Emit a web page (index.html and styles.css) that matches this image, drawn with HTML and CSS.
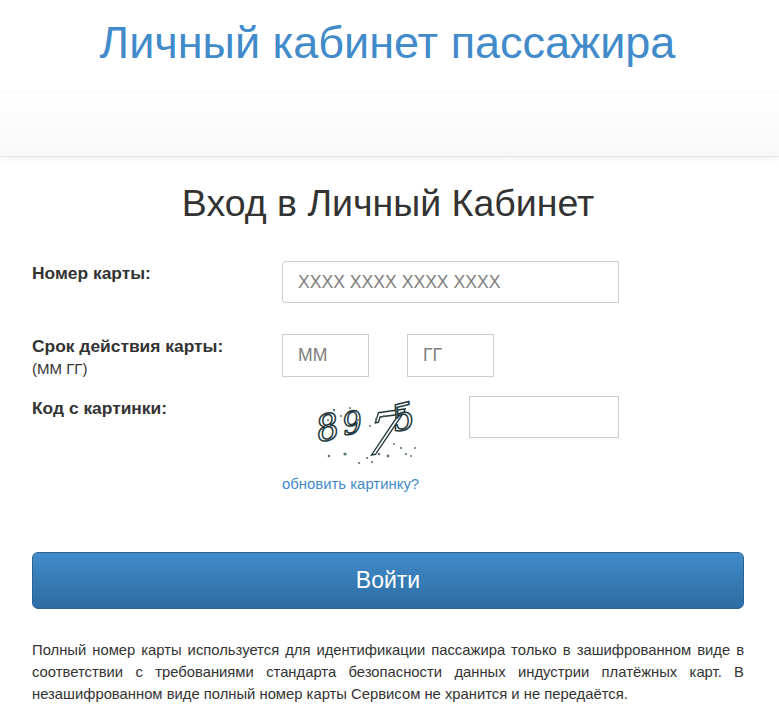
FILE: index.html
```html
<!DOCTYPE HTML>
<html>

<head>
    <meta charset="utf-8">
    <link rel="stylesheet" href="styles.css">
</head>

<body>
    <header class="top">
        <h1 class="site-title">Личный кабинет пассажира</h1>
    </header>
    <div class="navbar"></div>

    <main class="content">
        <h2 class="page-title">Вход в Личный Кабинет</h2>

        <form class="login">
            <div class="row row-card">
                <label class="label">Номер карты:</label>
                <input class="field field-card" type="text" placeholder="XXXX XXXX XXXX XXXX">
            </div>

            <div class="row row-date">
                <label class="label">Срок действия карты:<small class="hint">(ММ ГГ)</small></label>
                <div class="date">
                    <input class="field field-date" type="text" placeholder="ММ">
                    <input class="field field-date" type="text" placeholder="ГГ">
                </div>
            </div>

            <div class="row row-code">
                <label class="label">Код с картинки:</label>
                <div class="code">
                    <div class="captcha-line">
                        <svg class="captcha" width="150" height="70" viewBox="0 0 150 70">
                            <g class="captcha-digits">
                                <text class="digit-8" transform="translate(37 46) rotate(-12)">8</text>
                                <text class="digit-9" transform="translate(62 39) rotate(-8)">9</text>
                                <text class="digit-7" transform="translate(82 60) rotate(-8) skewX(-16)">7</text>
                                <text class="digit-5" transform="translate(113 36) rotate(-14)">5</text>
                            </g>
                            <g class="captcha-dots">
                                <circle cx="52" cy="14" r="1.2"/>
                                <circle cx="59" cy="20" r="1"/>
                                <circle cx="68" cy="12" r="1"/>
                                <circle cx="73" cy="17" r="1.2"/>
                                <circle cx="46" cy="24" r="1"/>
                                <circle cx="66" cy="26" r="1"/>
                                <circle cx="76" cy="24" r="0.9"/>
                                <circle cx="94" cy="23" r="1"/>
                                <circle cx="102" cy="20" r="1"/>
                                <circle cx="108" cy="15" r="1.1"/>
                                <circle cx="88" cy="30" r="1"/>
                                <circle cx="47" cy="60" r="1.3"/>
                                <circle cx="63" cy="58" r="1.6"/>
                                <circle cx="77" cy="67" r="1.1"/>
                                <circle cx="85" cy="62" r="1.1"/>
                                <circle cx="90" cy="66" r="1.1"/>
                                <circle cx="97" cy="58" r="1.3"/>
                                <circle cx="106" cy="60" r="1.4"/>
                                <circle cx="112" cy="48" r="1"/>
                                <circle cx="119" cy="52" r="1.1"/>
                                <circle cx="124" cy="58" r="1.1"/>
                                <circle cx="129" cy="60" r="1"/>
                                <circle cx="133" cy="52" r="1"/>
                            </g>
                        </svg>
                        <input class="field field-code" type="text">
                    </div>
                    <a class="refresh" href="#">обновить картинку?</a>
                </div>
            </div>

            <button class="submit" type="button">Войти</button>
        </form>

        <p class="note">Полный номер карты используется для идентификации пассажира только в зашифрованном виде в соответствии с требованиями стандарта безопасности данных индустрии платёжных карт. В незашифрованном виде полный номер карты Сервисом не хранится и не передаётся.</p>
    </main>
</body>

</html>
```

FILE: styles.css
```css
* {
    box-sizing: border-box;
}

body {
    margin: 0;
    font-family: "Liberation Sans", Arial, sans-serif;
    font-size: 14px;
    color: #333;
    background-color: #fff;
}

.top {
    height: 92px;
    padding: 16px 4px 0 0;
    text-align: center;
}

.site-title {
    margin: 0;
    font-size: 45px;
    line-height: 54px;
    font-weight: normal;
    color: #428bca;
}

.navbar {
    height: 65px;
    background: linear-gradient(to bottom, #fff, #f8f8f8);
    border-top: 1px solid #f8f8f8;
    border-bottom: 1px solid #e4e4e4;
    box-shadow: 0 2px 5px rgba(0, 0, 0, .05);
}

.content {
    padding: 0 35px 0 32px;
}

.page-title {
    margin: 24px 0 0;
    font-size: 37.5px;
    line-height: 44px;
    font-weight: normal;
    text-align: center;
}

.row {
    display: grid;
    grid-template-columns: 250px 1fr;
}

.row-card {
    margin-top: 36px;
}

.row-date {
    margin-top: 31px;
}

.row-code {
    margin-top: 16px;
}

.label {
    font-size: 17.4px;
    line-height: 24px;
    font-weight: bold;
}

.hint {
    display: block;
    font-size: 15px;
    line-height: 22px;
    font-weight: normal;
}

.field {
    display: block;
    padding: 0 15px;
    border: 1px solid #ccc;
    font-family: inherit;
    font-size: 17.6px;
    color: #555;
    background-color: #fff;
    outline: none;
}

.field::placeholder {
    color: #808080;
    opacity: 1;
}

.field-card {
    width: 337px;
    height: 42px;
    border-radius: 4px 0 0 4px;
}

.date {
    display: flex;
    gap: 38px;
}

.field-date {
    width: 87px;
    height: 43px;
}

.captcha-line {
    display: flex;
    gap: 37px;
}

.captcha {
    display: block;
    flex: none;
    overflow: visible;
}

.captcha-digits {
    font-family: "DejaVu Serif", serif;
    font-style: italic;
    fill: #fff;
    stroke: #24393d;
    stroke-width: 1.5px;
}

.digit-8 {
    font-size: 36px;
}

.digit-9 {
    font-size: 31px;
}

.digit-7 {
    font-size: 56px;
}

.digit-5 {
    font-size: 36px;
}

.captcha-dots {
    fill: #5c7478;
}

.field-code {
    width: 150px;
    height: 42px;
}

.refresh {
    display: block;
    margin-top: 8px;
    font-size: 14.9px;
    line-height: 20px;
    color: #428bca;
    text-decoration: none;
}

.submit {
    display: block;
    width: 712px;
    height: 57px;
    margin-top: 58px;
    border: 1px solid #2a6496;
    border-radius: 6px;
    font-family: inherit;
    font-size: 23px;
    color: #fff;
    background: linear-gradient(to bottom, #428bca, #2d6ca2);
}

.note {
    margin: 30px 0 0;
    width: 712px;
    font-size: 14.8px;
    line-height: 22px;
    text-align: justify;
}
```
